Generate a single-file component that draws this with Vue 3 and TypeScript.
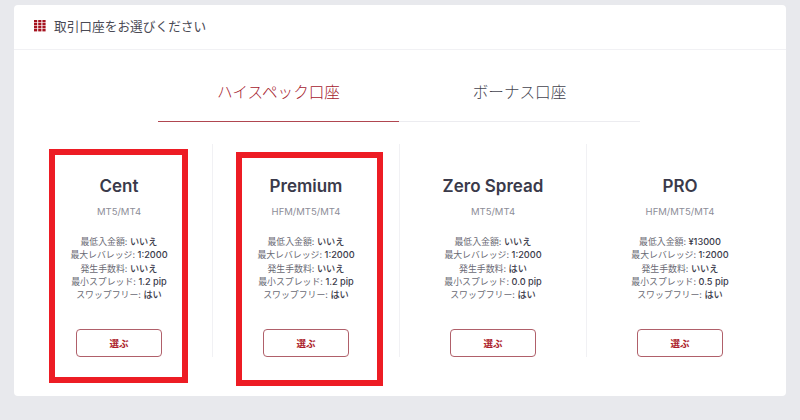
<script setup lang="ts">
interface Row { label: string; value: string }
interface Account { name: string; platform: string; rows: Row[] }
const make = (name: string, platform: string, dep: string, fee: string, spread: string): Account => ({
  name, platform,
  rows: [
    { label: '最低入金額:', value: dep },
    { label: '最大レバレッジ:', value: '1:2000' },
    { label: '発生手数料:', value: fee },
    { label: '最小スプレッド:', value: spread },
    { label: 'スワップフリー:', value: 'はい' },
  ],
})
const accounts: Account[] = [
  make('Cent', 'MT5/MT4', 'いいえ', 'いいえ', '1.2 pip'),
  make('Premium', 'HFM/MT5/MT4', 'いいえ', 'いいえ', '1.2 pip'),
  make('Zero Spread', 'MT5/MT4', 'いいえ', 'はい', '0.0 pip'),
  make('PRO', 'HFM/MT5/MT4', '¥13000', 'いいえ', '0.5 pip'),
]
</script>

<template>
  <div class="page">
    <div class="card">
      <div class="head">
        <svg class="icon" width="12" height="12" viewBox="0 0 12 12" fill="#a5121e">
          <template v-for="y in [0, 3, 6, 9]" :key="y">
            <rect v-for="x in [0, 4.2, 8.4]" :key="x" :x="x" :y="y" width="3.2" height="2.4" />
          </template>
        </svg>
        <span>取引口座をお選びください</span>
      </div>
      <div class="tabs">
        <div class="tab active">ハイスペック口座</div>
        <div class="tab">ボーナス口座</div>
      </div>
      <div class="cols">
        <div v-for="a in accounts" :key="a.name" class="col">
          <div class="name">{{ a.name }}</div>
          <div class="platform">{{ a.platform }}</div>
          <div class="rows">
            <div v-for="r in a.rows" :key="r.label" class="row">{{ r.label }} <b>{{ r.value }}</b></div>
          </div>
          <button class="pick">選ぶ</button>
        </div>
      </div>
    </div>
    <div class="mark mark1"></div>
    <div class="mark mark2"></div>
  </div>
</template>

<style scoped>
.page {
  position: relative;
  width: 800px;
  height: 420px;
  box-sizing: border-box;
  padding: 5px 14px 0;
  background: #e8e9ed;
  overflow: hidden;
  font-family: Inter, "Noto Sans CJK JP", sans-serif;
}
.card {
  height: 391px;
  background: #fff;
  border-radius: 4px;
  display: flex;
  flex-direction: column;
}
.head {
  height: 45px;
  box-sizing: border-box;
  border-bottom: 1px solid #f1f1f4;
  display: flex;
  align-items: center;
  gap: 8px;
  padding: 0 0 3px 20px;
  font-size: 12.7px;
  color: #4a4a55;
}
.icon { flex: none; }
.tabs {
  display: flex;
  margin: 0 146px 0 144px;
  height: 72px;
  box-sizing: border-box;
  border-bottom: 1px solid #ececf0;
}
.tab {
  flex: 1;
  height: 72px;
  box-sizing: border-box;
  text-align: center;
  padding-top: 31px;
  font-size: 15.6px;
  line-height: 24px;
  font-weight: 300;
  color: #45454f;
}
.tab.active {
  color: #a5212e;
  border-bottom: 1px solid #b04650;
}
.cols {
  display: flex;
  margin: 22px 13px 0 12px;
}
.col {
  flex: 1;
  height: 213px;
  box-sizing: border-box;
  padding-top: 31px;
  display: flex;
  flex-direction: column;
  align-items: center;
  border-left: 1px solid #f1f1f4;
}
.col:first-child { border-left: none; }
.name {
  font-size: 17px;
  line-height: 22px;
  font-weight: 600;
  color: #3a3a4a;
}
.platform {
  margin-top: 8px;
  font-size: 9.5px;
  line-height: 14px;
  color: #8d8d97;
}
.rows {
  margin-top: 16px;
  text-align: center;
  font-size: 8.9px;
  line-height: 13.3px;
  color: #6a6a74;
}
.row b {
  font-size: 9.2px;
  font-weight: 500;
  color: #3a3a4a;
}
.pick {
  margin-top: auto;
  width: 86px;
  height: 28px;
  background: #fff;
  border: 1px solid #b0606a;
  border-radius: 4px;
  color: #ac1c2a;
  font-family: inherit;
  font-size: 9.5px;
  font-weight: 700;
  padding: 0;
}
.mark {
  position: absolute;
  box-sizing: border-box;
  border: 6.5px solid #ed1c24;
}
.mark1 { left: 49px; top: 149px; width: 139px; height: 234px; }
.mark2 { left: 236px; top: 152px; width: 147px; height: 234px; }
</style>
